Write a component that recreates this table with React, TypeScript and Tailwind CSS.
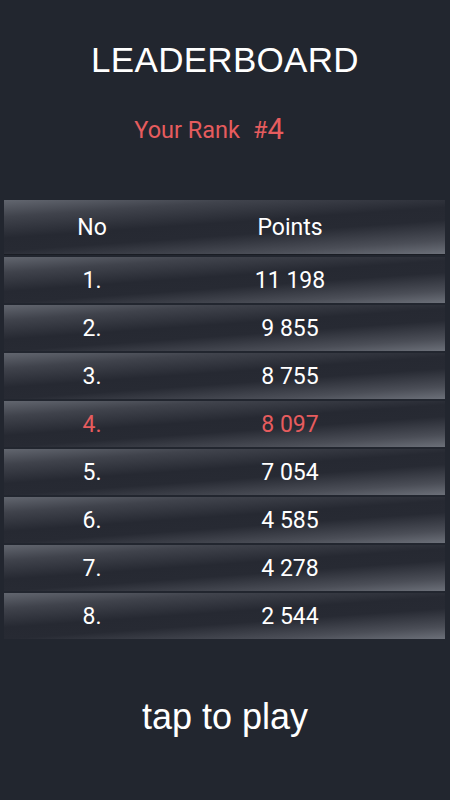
import React from "react";

const rows = [
  ["1.", "11 198"],
  ["2.", "9 855"],
  ["3.", "8 755"],
  ["4.", "8 097"],
  ["5.", "7 054"],
  ["6.", "4 585"],
  ["7.", "4 278"],
  ["8.", "2 544"],
];

const bar =
  "bg-[linear-gradient(176deg,#62666f_0%,#40434c_20%,#262932_45%,#272a33_60%,#4b4e57_84%,#6c7079_100%)]";

export default function App() {
  return (
    <div className="w-[450px] h-[800px] bg-[#22262f] flex flex-col font-['Roboto',sans-serif] text-white">
      <div className="h-[40px]" />
      <h1 className="text-center text-[35px] leading-[40px] font-['Liberation_Sans',Arial,sans-serif] tracking-[0.3px]">
        LEADERBOARD
      </h1>
      <div className="h-[30px]" />
      <div className="flex items-end justify-center text-[#e65c5e] pr-[32px] h-[34px]">
        <span className="text-[23.5px] leading-[27px]">Your Rank</span>
        <span className="text-[23.5px] leading-[27px] ml-[13px]">#</span>
        <span className="text-[29px] leading-[29px]">4</span>
      </div>
      <div className="h-[56px]" />
      <div className="ml-[4px] w-[441px] flex flex-col gap-[2px]">
        <div className={`h-[55px] pt-[3px] flex items-center text-[23px] ${bar} border-b border-[#1a1d24]`}>
          <div className="w-[176px] text-center">No</div>
          <div className="w-[220px] text-center">Points</div>
        </div>
        {rows.map(([n, p]) => (
          <div
            key={n}
            className={`h-[46px] pt-[2px] flex items-center text-[23px] ${bar} ${n === "4." ? "text-[#e65c5e]" : "text-white"}`}
          >
            <div className="w-[176px] text-center">{n}</div>
            <div className="w-[220px] text-center">{p}</div>
          </div>
        ))}
      </div>
      <div className="h-[58px]" />
      <div className="text-center text-[36px] leading-[40px] font-['Liberation_Sans',Arial,sans-serif]">
        tap to play
      </div>
    </div>
  );
}
